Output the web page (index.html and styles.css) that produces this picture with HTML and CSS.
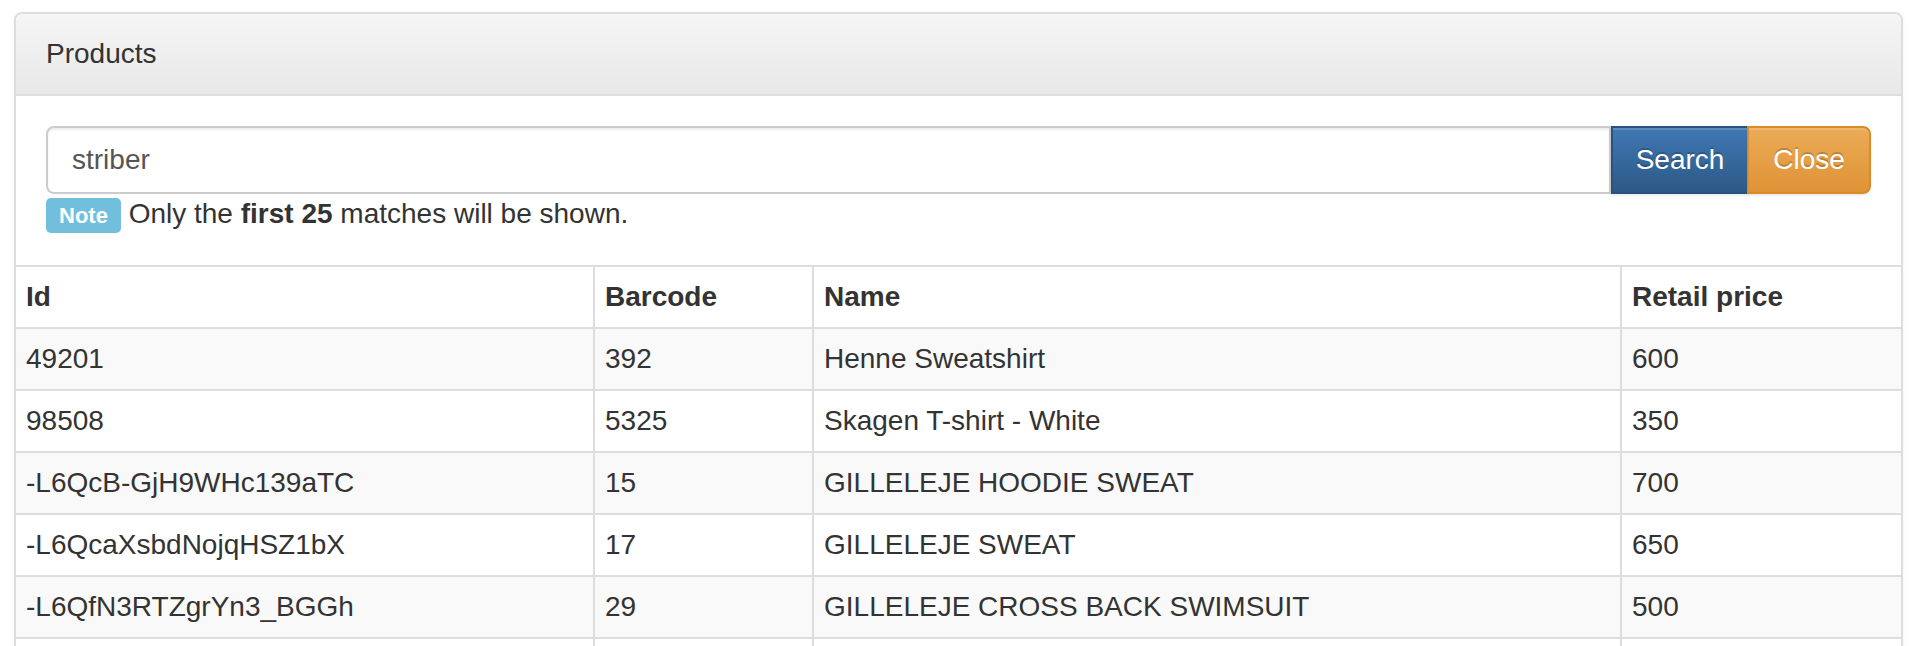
FILE: index.html
```html
<!DOCTYPE html>
<html lang="en">
<head>
<meta charset="utf-8">
<title>Products</title>
<link rel="stylesheet" href="styles.css">
</head>
<body>
<div class="panel">
  <div class="panel-heading">Products</div>
  <div class="panel-body">
    <div class="input-group">
      <div class="search-input">striber</div>
      <button class="btn btn-search" type="button">Search</button>
      <button class="btn btn-close" type="button">Close</button>
    </div>
    <p class="help"><span class="note">Note</span> Only the <b>first 25</b> matches will be shown.</p>
  </div>
  <table class="products">
    <thead>
      <tr>
        <th class="col-id">Id</th>
        <th class="col-barcode">Barcode</th>
        <th class="col-name">Name</th>
        <th>Retail price</th>
      </tr>
    </thead>
    <tbody>
      <tr><td>49201</td><td>392</td><td>Henne Sweatshirt</td><td>600</td></tr>
      <tr><td>98508</td><td>5325</td><td>Skagen T-shirt - White</td><td>350</td></tr>
      <tr><td>-L6QcB-GjH9WHc139aTC</td><td>15</td><td>GILLELEJE HOODIE SWEAT</td><td>700</td></tr>
      <tr><td>-L6QcaXsbdNojqHSZ1bX</td><td>17</td><td>GILLELEJE SWEAT</td><td>650</td></tr>
      <tr><td>-L6QfN3RTZgrYn3_BGGh</td><td>29</td><td>GILLELEJE CROSS BACK SWIMSUIT</td><td>500</td></tr>
      <tr><td></td><td></td><td></td><td></td></tr>
    </tbody>
  </table>
</div>
</body>
</html>
```
FILE: styles.css
```css
html, body {
  margin: 0;
  background: #fff;
}

body {
  font-family: "Liberation Sans", Arial, Helvetica, sans-serif;
  font-size: 28px;
  line-height: 40px;
  color: #333;
}

.panel {
  margin: 12px 9px 0 14px;
  border: 2px solid #ddd;
  border-radius: 8px;
  box-shadow: 0 2px 4px rgba(0, 0, 0, 0.05);
  background: #fff;
}

.panel-heading {
  padding: 20px 30px;
  background: linear-gradient(#f5f5f5, #e8e8e8);
  border-bottom: 2px solid #ddd;
  border-radius: 6px 6px 0 0;
}

.panel-body {
  padding: 30px 30px 31px;
}

.input-group {
  display: flex;
  height: 68px;
}

.search-input {
  flex: 1;
  display: flex;
  align-items: center;
  padding: 0 24px;
  border: 2px solid #ccc;
  border-radius: 8px 0 0 8px;
  color: #555;
  box-shadow: inset 0 2px 2px rgba(0, 0, 0, 0.075);
}

.btn {
  height: 68px;
  padding: 0;
  font: inherit;
  color: #fff;
  border: 2px solid;
  text-shadow: 0 -2px 0 rgba(0, 0, 0, 0.2);
  box-shadow: inset 0 2px 0 rgba(255, 255, 255, 0.15), 0 2px 2px rgba(0, 0, 0, 0.075);
  cursor: pointer;
}

.btn-search {
  width: 138px;
  background: linear-gradient(#3f79b3, #2c5986);
  border-color: #285380;
  border-radius: 0;
}

.btn-close {
  width: 124px;
  margin-left: -2px;
  background: linear-gradient(#ebab56, #df9337);
  border-color: #d98a2c;
  border-radius: 0 8px 8px 0;
}

.help {
  margin: 0;
}

.note {
  display: inline-block;
  height: 35px;
  line-height: 35px;
  padding: 0 13px;
  font-size: 22px;
  font-weight: bold;
  color: #fff;
  background: #72bedd;
  border-radius: 5px;
}

.products {
  width: 100%;
  border-collapse: separate;
  border-spacing: 0;
  table-layout: fixed;
}

.products th,
.products td {
  box-sizing: border-box;
  padding: 10px;
  text-align: left;
  vertical-align: top;
  border-top: 2px solid #ddd;
  border-left: 2px solid #ddd;
  height: 62px;
}

.products th:first-child,
.products td:first-child {
  border-left: 0;
}

.products th {
  font-weight: bold;
}

.products tbody tr:nth-child(odd) {
  background: #f9f9f9;
}

.col-id { width: 577px; }
.col-barcode { width: 219px; }
.col-name { width: 808px; }
```
